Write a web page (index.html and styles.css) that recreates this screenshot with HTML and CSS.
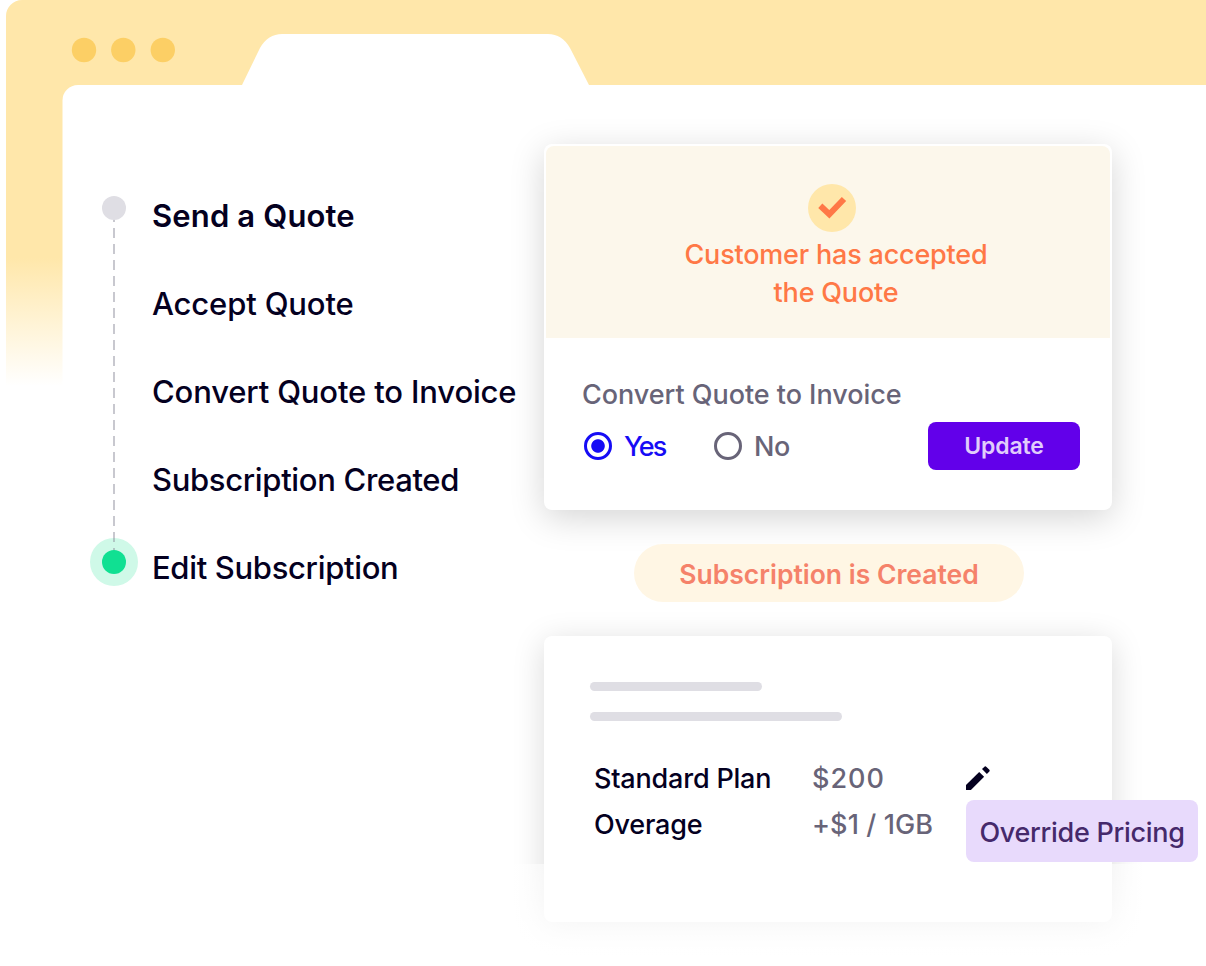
FILE: index.html
```
<!DOCTYPE html>
<html lang="en">
<head>
<meta charset="utf-8">
<title>Quote to subscription</title>
<link rel="stylesheet" href="styles.css">
</head>
<body>
<main class="scene">
  <svg class="frame" width="1206" height="966" viewBox="0 0 1206 966" aria-hidden="true">
    <defs>
      <linearGradient id="fade" gradientUnits="userSpaceOnUse" x1="0" y1="258" x2="0" y2="386">
        <stop offset="0" stop-color="#ffe7aa"/>
        <stop offset="1" stop-color="#ffe7aa" stop-opacity="0"/>
      </linearGradient>
    </defs>
    <path fill="url(#fade)" d="M6 386V16A16 16 0 0 1 22 0H1206V85H589L570 48Q562 34 548 34H282Q268 34 260 48L242 85H78A15.500 15.500 0 0 0 62.500 100.500V386Z"/>
    <g fill="#fccf65"><circle cx="84" cy="50" r="12.200"/><circle cx="123.300" cy="50" r="12.200"/><circle cx="162.800" cy="50" r="12.200"/></g>
  </svg>

  <section class="timeline">
    <svg class="rail" width="48" height="390" viewBox="0 0 48 390" aria-hidden="true">
      <circle cx="24" cy="366" r="24" fill="#cff9e8"/>
      <path d="M24 16V366" stroke="#8d8b9b" stroke-opacity=".48" stroke-width="2" stroke-dasharray="10 6"/>
      <circle cx="24" cy="12" r="12" fill="#dfdee4"/>
      <circle cx="24" cy="366" r="12" fill="#10e092"/>
    </svg>
    <ol class="steps">
      <li class="step current">Send a Quote</li>
      <li class="step">Accept Quote</li>
      <li class="step">Convert Quote to Invoice</li>
      <li class="step tight">Subscription Created</li>
      <li class="step tight">Edit Subscription</li>
    </ol>
  </section>

  <section class="cards">
    <article class="card quote">
      <header class="banner">
        <svg class="check" width="48" height="48" viewBox="0 0 48 48" aria-hidden="true">
          <circle cx="24" cy="24" r="24" fill="#ffe7aa"/>
          <path d="M12.300 21.800L21.300 30.300L36 15" fill="none" stroke="#ff7846" stroke-width="6"/>
        </svg>
        <p class="accepted">Customer has accepted<br>the Quote</p>
      </header>
      <div class="form">
        <p class="question">Convert Quote to Invoice</p>
        <div class="controls">
          <span class="radio on"><i class="ring"></i><span class="yes">Yes</span></span>
          <span class="radio"><i class="ring"></i><span>No</span></span>
          <button class="update">Update</button>
        </div>
      </div>
    </article>

    <div class="pill">Subscription is Created</div>

    <article class="card plan">
      <div class="bar short"></div>
      <div class="bar long"></div>
      <div class="prices">
        <span>Standard Plan</span>
        <span class="value amount">$200</span>
        <svg class="pencil" width="24" height="24" viewBox="0 0 24 24" aria-hidden="true">
          <path fill="#04001f" d="M0 19.100L13.200 5.900L18.100 10.800L4.900 24H0Z"/>
          <path fill="#04001f" d="M16 3.100L18.200.900Q19.300-.300 20.500.900L23.100 3.500Q24.300 4.700 23.100 5.800L20.900 8Z"/>
        </svg>
        <span>Overage</span>
        <span class="value rate">+$1 / 1GB</span>
      </div>
      <div class="veil"></div>
      <div class="tooltip">Override Pricing</div>
    </article>
  </section>
</main>
</body>
</html>
```
FILE: styles.css
```
* { box-sizing: border-box; }
body { margin: 0; background: #fff; font-family: Inter, "Liberation Sans", sans-serif; font-weight: 450; color: #04001f; }
p, ol { margin: 0; padding: 0; }
span, li { white-space: nowrap; }
svg { display: block; }

.scene { position: relative; width: 1206px; height: 966px; overflow: hidden; display: flex; padding: 144px 0 0 90px; }
.frame { position: absolute; left: 0; top: 0; }

/* Timeline */
.timeline { position: relative; display: flex; width: 454px; padding-top: 52px; }
.rail { flex: none; }
.steps { list-style: none; padding-left: 14px; margin-top: -24.500px; }
.step { height: 88px; line-height: 88px; font-size: 31px; letter-spacing: -.15px; }
.tight { letter-spacing: -.33px; }
.current { font-weight: 600; letter-spacing: .15px; }

/* Cards */
.cards { position: relative; width: 568px; display: flex; flex-direction: column; align-items: center; }
.card { position: relative; width: 568px; background: #fff; border-radius: 8px; }
.quote { height: 366px; padding: 2px; box-shadow: 0 8px 34px rgba(0, 0, 0, .17); }
.banner { height: 192px; padding-top: 38px; background: #fcf7eb; border-radius: 8px 8px 0 0; color: #ff7846; }
.check { margin-left: 262px; }
.accepted { width: 580px; margin-top: 4px; text-align: center; font-size: 27px; line-height: 38px; letter-spacing: -.2px; }
.form { padding: 38px 30px 0 36px; }
.question { font-size: 27px; line-height: 38px; letter-spacing: -.04px; color: #686478; }
.controls { display: flex; align-items: center; height: 48px; margin-top: 8px; padding-left: 2px; }
.radio { display: flex; align-items: center; gap: 12px; width: 130px; font-size: 27px; line-height: 50px; letter-spacing: -.4px; color: #686478; }
.radio span { padding-top: 2px; }
.ring { width: 28px; height: 28px; border: 3px solid #686478; border-radius: 50%; }
.on { color: #160cf5; }
.on .ring { border-color: #160cf5; background: radial-gradient(circle, #160cf5 6.300px, #fff 7.200px); }
.yes { letter-spacing: -1.800px; }
.update { width: 152px; height: 48px; margin-left: auto; padding: 0; border: 0; border-radius: 8px; background: #6200ea; color: #e0ccfb; font: 600 23px/48px Inter, "Liberation Sans", sans-serif; letter-spacing: -.1px; }

.pill { position: relative; left: 1px; width: 390px; height: 58px; margin-top: 34px; border-radius: 29px; background: #fff6e4; color: #f5826a; font-size: 26.500px; font-weight: 600; line-height: 61px; text-align: center; }

.plan { height: 286px; margin-top: 34px; padding: 46px; box-shadow: 0 6px 32px rgba(0, 0, 0, .15); }
.bar { height: 9px; border-radius: 5px; background: #dfdee4; }
.short { width: 172px; }
.long { width: 252px; margin-top: 21px; }
.prices { display: grid; grid-template-columns: 218px 154px 24px; grid-auto-rows: 46px; align-items: center; margin: 34px 0 0 4px; font-size: 27px; line-height: 46px; letter-spacing: -.2px; }
.prices span { padding-top: 2px; }
.value { color: #686478; }
.amount { letter-spacing: 1px; }
.rate { letter-spacing: .1px; }
.veil { position: absolute; left: -36px; top: 228px; width: 640px; height: 102px; background: linear-gradient(rgba(255, 255, 255, .55), rgba(255, 255, 255, .8) 70%, #fff); }
.tooltip { position: absolute; left: 422px; top: 164px; width: 232px; height: 62px; border-radius: 8px; background: #e8dafc; color: #45296b; font-size: 27px; line-height: 66px; letter-spacing: -.3px; text-align: center; }
```
